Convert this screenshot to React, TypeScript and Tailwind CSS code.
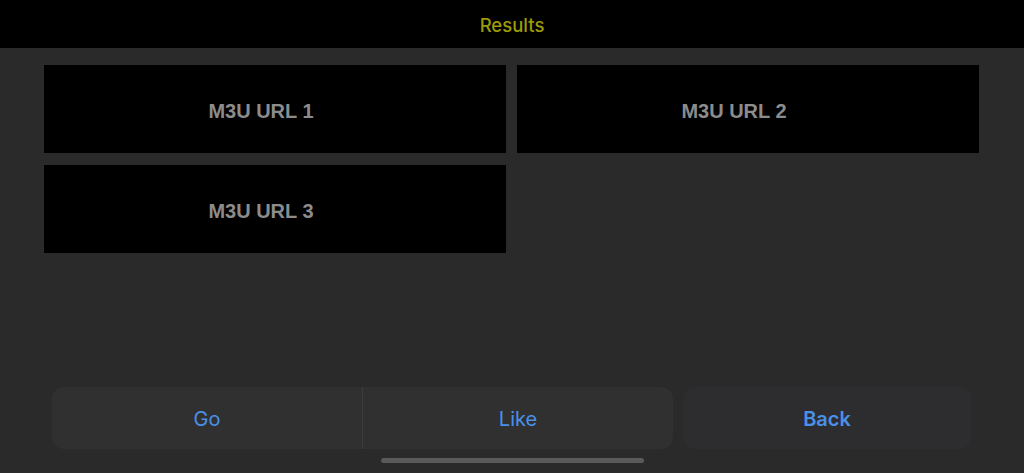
const urls = ["M3U URL 1", "M3U URL 2", "M3U URL 3"];

export default function App() {
  return (
    <div className="flex h-[473px] w-[1024px] flex-col overflow-hidden bg-[#2a2a2a] font-['Inter',sans-serif]">
      <header className="flex h-[48px] shrink-0 items-center justify-center bg-black pt-[3px]">
        <h1 className="text-[18.5px] font-medium text-[#9c9a08]">Results</h1>
      </header>

      <div className="grid grid-cols-2 gap-x-[11px] gap-y-[12px] pl-[44px] pr-[45px] pt-[17px]">
        {urls.map((url) => (
          <button
            key={url}
            className="flex h-[88px] items-center justify-center bg-black pr-[28px] pt-[3px] font-['Liberation_Sans',sans-serif] text-[20px] font-bold text-[#8c8c8c]"
          >
            {url}
          </button>
        ))}
      </div>

      <div className="mt-auto flex gap-[10px] pl-[52px] pr-[53px]">
        <div className="flex h-[62px] w-[621px] overflow-hidden rounded-[12px] bg-[#303030]">
          <button className="flex flex-1 items-center justify-center pt-[2px] text-[20px] text-[#4a90e8]">Go</button>
          <div className="w-px bg-[#3c3c3c]" />
          <button className="flex flex-1 items-center justify-center pt-[2px] text-[20px] text-[#4a90e8]">Like</button>
        </div>
        <button className="flex h-[62px] flex-1 items-center justify-center rounded-[12px] bg-[#2d2d2f] pt-[2px] text-[20px] font-semibold text-[#4a90e8]">
          Back
        </button>
      </div>

      <div className="flex justify-center pb-[10px] pt-[9px]">
        <div className="h-[5px] w-[263px] rounded-full bg-[#5a5a5a]" />
      </div>
    </div>
  );
}
